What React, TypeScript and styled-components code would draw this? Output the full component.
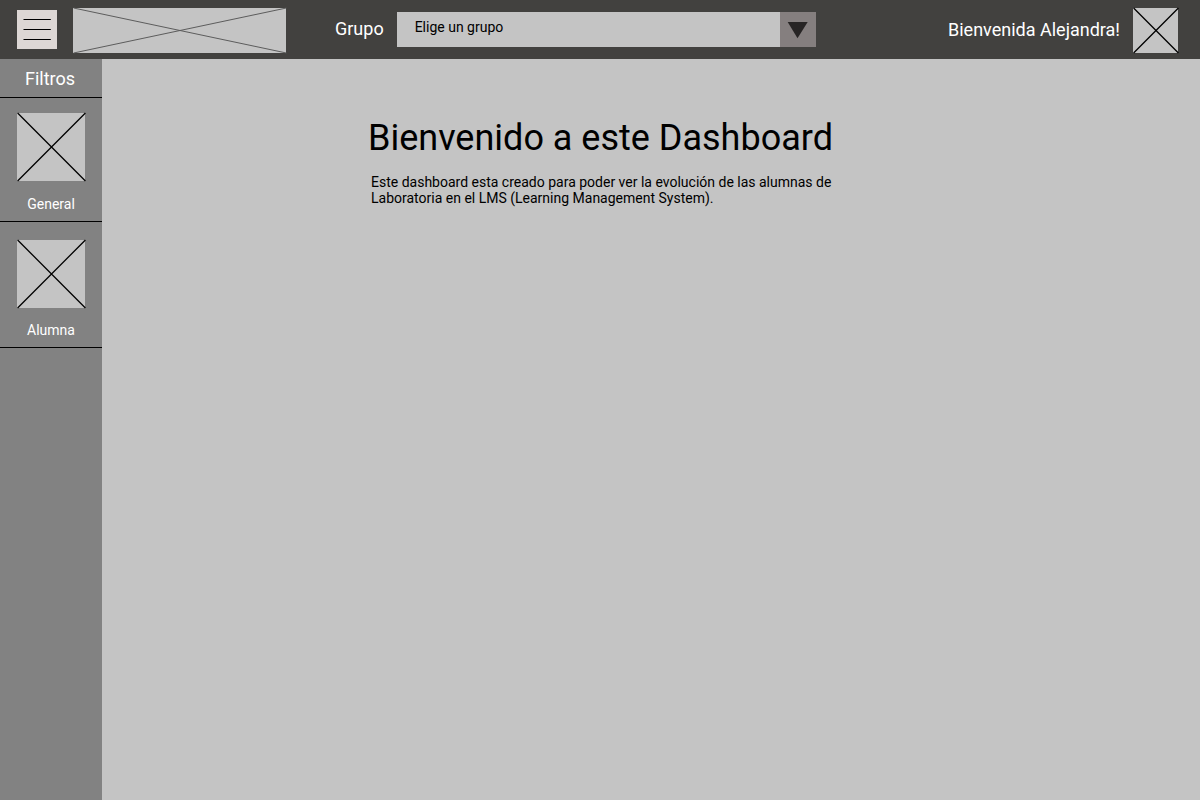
import React from "react";
import styled, { createGlobalStyle } from "styled-components";

const GlobalStyle = createGlobalStyle`
  *, *::before, *::after { box-sizing: border-box; }
  body {
    margin: 0;
    background: #c4c4c4;
    color: #000;
    font-family: Roboto, "Liberation Sans", sans-serif;
    font-size: 14px;
    line-height: 16px;
  }
  h1, h2, p, ul { margin: 0; padding: 0; }
`;

const Page = styled.div`
  display: flex;
  flex-direction: column;
  min-height: 100vh;
`;

const TopBar = styled.header`
  display: flex;
  align-items: center;
  height: 59px;
  padding: 0 22px 0 17px;
  background: #42413f;
  color: #fff;
`;

const MenuButton = styled.button`
  flex: none;
  display: block;
  width: 40px;
  height: 39px;
  margin-right: 16px;
  padding: 0;
  border: 0;
  background: #ddd7d5;
  cursor: pointer;
`;

const Drawing = styled.svg`
  display: block;
  overflow: visible;
`;

const Placeholder = styled.div<{ $width: number; $height: number }>`
  flex: none;
  width: ${(p) => p.$width}px;
  height: ${(p) => p.$height}px;
  background: #c4c4c4;
`;

const BarItem = styled.div`
  flex: none;
  padding-top: 2px;
`;

const GroupField = styled.div`
  display: flex;
  flex: 0 1 481px;
  align-items: center;
  gap: 13px;
  min-width: 240px;
  margin-left: 49px;
`;

const BarLabel = styled.label`
  padding-bottom: 2px;
  font-size: 18px;
  line-height: 21px;
`;

const SelectBox = styled.div`
  display: grid;
  flex: 1;
  height: 35px;
`;

const GroupSelect = styled.select`
  grid-area: 1 / 1;
  width: 100%;
  height: 35px;
  padding: 0 40px 6px 18px;
  border: 0;
  border-radius: 0;
  appearance: none;
  background: #c4c4c4;
  color: #000;
  font: inherit;
`;

const SelectArrow = styled.span`
  grid-area: 1 / 1;
  justify-self: end;
  width: 36px;
  height: 35px;
  background: #857f7f;
  pointer-events: none;
`;

const User = styled.div`
  display: flex;
  flex: none;
  align-items: center;
  gap: 13px;
  margin-left: auto;
  padding-top: 2px;
`;

const Greeting = styled.p`
  && { padding-bottom: 2px; }
  font-size: 18px;
  line-height: 21px;
`;

const Body = styled.div`
  display: flex;
  flex: 1;
`;

const Sidebar = styled.nav`
  flex: none;
  width: 102px;
  background: #828282;
  color: #fff;
`;

const SidebarTitle = styled.h2`
  height: 39px;
  && { padding: 9px 2px 0 0; }
  border-bottom: 1px solid #000;
  font-size: 18px;
  font-weight: 400;
  line-height: 21px;
  text-align: center;
`;

const FilterButton = styled.button<{ $top: number; $height: number }>`
  display: flex;
  flex-direction: column;
  align-items: center;
  justify-content: space-between;
  width: 100%;
  height: ${(p) => p.$height}px;
  padding: ${(p) => p.$top}px 0 9px;
  border: 0;
  border-bottom: 1px solid #000;
  background: none;
  color: inherit;
  font: inherit;
  cursor: pointer;
`;

const Main = styled.main`
  flex: 1;
  min-width: 0;
  padding: 58px 24px 24px 266px;
`;

const Title = styled.h1`
  font-size: 36px;
  font-weight: 400;
  line-height: 42px;
`;

const Intro = styled.p`
  max-width: 480px;
  && {
    margin-top: 15px;
    padding-left: 3px;
  }
`;

type CrossedBoxProps = { width: number; height: number; stroke?: string; strokeWidth?: number };

function CrossedBox({ width, height, stroke = "#000", strokeWidth = 1.3 }: CrossedBoxProps) {
  return (
    <Placeholder $width={width} $height={height}>
      <Drawing width={width} height={height} viewBox={`0 0 ${width} ${height}`} aria-hidden="true">
        <path
          d={`M0.6 0L${width + 0.4} ${height}M0.6 ${height}L${width + 0.4} 0`}
          stroke={stroke}
          strokeWidth={strokeWidth}
          fill="none"
        />
      </Drawing>
    </Placeholder>
  );
}

const filters = [
  { name: "General", top: 15, height: 124 },
  { name: "Alumna", top: 18, height: 126 },
];

export default function App() {
  return (
    <>
      <GlobalStyle />
      <Page>
        <TopBar>
          <MenuButton type="button" aria-label="Menú">
            <Drawing width="40" height="39" viewBox="0 0 40 39" aria-hidden="true">
              <path d="M6.5 9.5H33.8M6.5 19.5H33.8M6.5 29.5H33.8" stroke="#000" />
            </Drawing>
          </MenuButton>
          <BarItem>
            <CrossedBox width={213} height={45} stroke="#5c5c5c" strokeWidth={1} />
          </BarItem>
          <GroupField>
            <BarLabel htmlFor="group">Grupo</BarLabel>
            <SelectBox>
              <GroupSelect id="group" defaultValue="">
                <option value="">Elige un grupo</option>
              </GroupSelect>
              <SelectArrow>
                <Drawing width="36" height="35" viewBox="0 0 36 35" aria-hidden="true">
                  <path d="M7.7 10H27.7L17.5 26.3Z" fill="#272424" />
                </Drawing>
              </SelectArrow>
            </SelectBox>
          </GroupField>
          <User>
            <Greeting>Bienvenida Alejandra!</Greeting>
            <CrossedBox width={45} height={45} />
          </User>
        </TopBar>
        <Body>
          <Sidebar aria-label="Filtros">
            <SidebarTitle>Filtros</SidebarTitle>
            {filters.map((f) => (
              <FilterButton key={f.name} type="button" $top={f.top} $height={f.height}>
                <CrossedBox width={68} height={68} />
                <span>{f.name}</span>
              </FilterButton>
            ))}
          </Sidebar>
          <Main>
            <Title>Bienvenido a este Dashboard</Title>
            <Intro>
              Este dashboard esta creado para poder ver la evolución de las alumnas de Laboratoria en el LMS (Learning
              Management System).
            </Intro>
          </Main>
        </Body>
      </Page>
    </>
  );
}
